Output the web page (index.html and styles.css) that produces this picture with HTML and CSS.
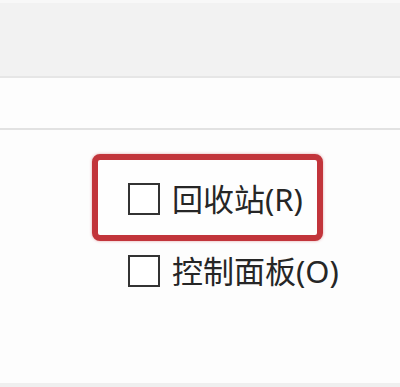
FILE: index.html
```html
<!DOCTYPE html>
<html lang="zh-CN">
<head>
<meta charset="utf-8">
<title>桌面图标设置</title>
<link rel="stylesheet" href="styles.css">
</head>
<body>
<div class="topband"></div>
<div class="gap"></div>
<div class="divider"></div>
<div class="content">
  <div class="highlight">
    <label class="option"><span class="check"></span><span class="label">回收站(R)</span></label>
  </div>
  <label class="option option-plain"><span class="check"></span><span class="label">控制面板(O)</span></label>
</div>
<div class="footer"></div>
</body>
</html>
```
FILE: styles.css
```css
html, body {
  margin: 0;
  padding: 0;
}
body {
  width: 400px;
  height: 387px;
  background: #fdfdfd;
  font-family: "Noto Sans", "Noto Sans CJK SC", sans-serif;
  color: #262626;
  display: flex;
  flex-direction: column;
  overflow: hidden;
}
.topband {
  height: 78px;
  box-sizing: border-box;
  background: #f2f2f2;
  border-top: 3px solid #f8f8f8;
  border-bottom: 2px solid #e6e6e6;
}
.gap {
  height: 50px;
}
.divider {
  height: 2px;
  background: #e2e2e2;
}
.content {
  flex: 1;
  padding: 24px 0 0 92px;
  display: flex;
  flex-direction: column;
}
.highlight {
  width: 231px;
  height: 87px;
  box-sizing: border-box;
  border: 6px solid #c2353b;
  border-radius: 8px;
  box-shadow: 0 0 3px rgba(194, 53, 59, 0.45);
  padding: 23px 0 0 30px;
  background: #fefefe;
}
.option {
  display: flex;
  align-items: center;
  gap: 12px;
  height: 32px;
}
.option-plain {
  margin: 14px 0 0 36px;
}
.check {
  width: 32px;
  height: 32px;
  box-sizing: border-box;
  border: 2px solid #333;
  background: #fff;
  flex: none;
}
.label {
  font-size: 31px;
  line-height: 32px;
  white-space: nowrap;
  color: #262626;
}
.footer {
  height: 4px;
  background: #efefef;
}
```
